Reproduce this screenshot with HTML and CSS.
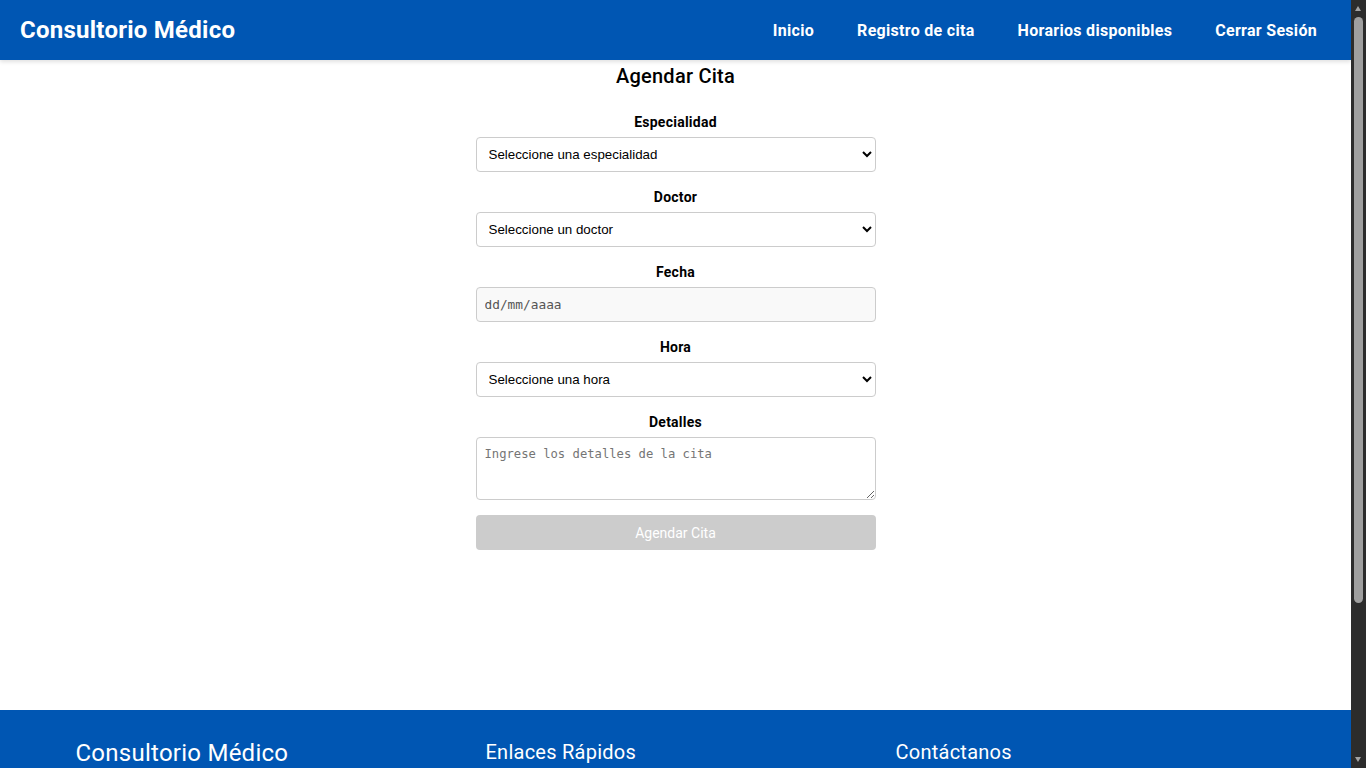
FILE: index.html
```html
<!DOCTYPE html>
<html lang="es">
<head>
<meta charset="utf-8">
<title>Agendar Cita</title>
<link rel="stylesheet" href="styles.css">
</head>
<body>
<header class="topbar">
  <div class="brand">Consultorio Médico</div>
  <nav class="nav">
    <a href="#">Inicio</a>
    <a href="#">Registro de cita</a>
    <a href="#">Horarios disponibles</a>
    <a href="#">Cerrar Sesión</a>
  </nav>
</header>
<main class="main">
  <form class="form">
    <h2 class="form-title">Agendar Cita</h2>
    <div class="group">
      <label class="label">Especialidad</label>
      <select class="control"><option>Seleccione una especialidad</option></select>
    </div>
    <div class="group">
      <label class="label">Doctor</label>
      <select class="control"><option>Seleccione un doctor</option></select>
    </div>
    <div class="group">
      <label class="label">Fecha</label>
      <input class="control date" type="text" placeholder="dd/mm/aaaa">
    </div>
    <div class="group">
      <label class="label">Hora</label>
      <select class="control"><option>Seleccione una hora</option></select>
    </div>
    <div class="group last">
      <label class="label">Detalles</label>
      <textarea class="control area" placeholder="Ingrese los detalles de la cita"></textarea>
    </div>
    <button class="submit" type="button" disabled>Agendar Cita</button>
  </form>
</main>
<footer class="footer">
  <div class="footer-inner">
    <div class="col">
      <h2 class="col-brand">Consultorio Médico</h2>
      <p class="col-text">Atención médica de calidad para usted y su familia.</p>
    </div>
    <div class="col">
      <h3 class="col-title">Enlaces Rápidos</h3>
      <ul class="col-list">
        <li>Inicio</li>
        <li>Registro de cita</li>
        <li>Horarios disponibles</li>
      </ul>
    </div>
    <div class="col">
      <h3 class="col-title">Contáctanos</h3>
      <ul class="col-list">
        <li>Teléfono: 555-123-4567</li>
        <li>Email: contacto@consultorio.com</li>
      </ul>
    </div>
  </div>
  <div class="copy">© 2024 Consultorio Médico. Todos los derechos reservados.</div>
</footer>
<div class="vscroll" aria-hidden="true">
  <span class="arrow-up"></span>
  <span class="thumb"></span>
  <span class="arrow-down"></span>
</div>
</body>
</html>
```
FILE: styles.css
```css
html {
  background: #ffffff;
}
body {
  margin: 0 15px 0 0;
  background: #ffffff;
  font-family: Roboto, "Liberation Sans", Arial, sans-serif;
  letter-spacing: 0.25px;
  color: #000;
}
.topbar {
  height: 60px;
  background: #0056b3;
  display: flex;
  align-items: center;
  justify-content: space-between;
  padding: 0 20px;
  box-shadow: 0 2px 4px rgba(0, 0, 0, 0.12);
  position: relative;
  z-index: 1;
}
.brand {
  color: #fff;
  font-size: 24px;
  font-weight: 700;
}
.nav {
  display: flex;
  gap: 43px;
  padding-right: 14px;
}
.nav a {
  color: #fff;
  text-decoration: none;
  font-weight: 700;
  font-size: 16px;
  letter-spacing: 0.3px;
}
.main {
  min-height: 650px;
}
.form {
  width: 400px;
  margin: 0 auto;
  display: flex;
  flex-direction: column;
}
.form-title {
  margin: 5px 0 26px;
  text-align: center;
  font-size: 20px;
  font-weight: 500;
  line-height: 23px;
}
.group {
  display: flex;
  flex-direction: column;
  margin-bottom: 17px;
}
.group.last {
  margin-bottom: 15px;
}
.label {
  text-align: center;
  font-weight: 700;
  font-size: 14px;
  line-height: 16px;
  margin-bottom: 7px;
}
.control {
  box-sizing: border-box;
  width: 100%;
  height: 35px;
  border: 1px solid #cccccc;
  border-radius: 4px;
  padding: 8px;
  background: #ffffff;
  font-family: "Liberation Sans", Arial, sans-serif;
  font-size: 13.33px;
  letter-spacing: 0;
  color: #000;
}
.date {
  background: #f9f9f9;
  font-family: "DejaVu Sans Mono", monospace;
  font-size: 12.8px;
}
.date::placeholder {
  color: #555;
}
.area {
  height: 63px;
  font-family: "DejaVu Sans Mono", monospace;
  font-size: 12.2px;
  padding-top: 9px;
  resize: vertical;
}
.area::placeholder {
  color: #757575;
}
.submit {
  height: 35px;
  border: none;
  border-radius: 4px;
  background: #cccccc;
  color: #ffffff;
  font-family: Roboto, "Liberation Sans", Arial, sans-serif;
  font-size: 14px;
  letter-spacing: 0;
}
.footer {
  background: #0056b3;
  color: #fff;
  padding: 28px 0 20px;
}
.footer-inner {
  max-width: 1200px;
  margin: 0 auto;
  display: flex;
  gap: 30px;
}
.col {
  flex: 1;
}
.col-brand {
  margin: 0 0 12px;
  font-size: 24px;
  font-weight: 400;
  line-height: 30px;
}
.col-title {
  margin: 0 0 12px;
  font-size: 20px;
  font-weight: 400;
  line-height: 28px;
}
.col-text {
  margin: 0;
  font-size: 15px;
  line-height: 22px;
}
.col-list {
  list-style: none;
  margin: 0;
  padding: 0;
  font-size: 15px;
  line-height: 26px;
}
.copy {
  max-width: 1200px;
  margin: 40px auto 0;
  padding-top: 16px;
  border-top: 1px solid rgba(255, 255, 255, 0.3);
  text-align: center;
  font-size: 14px;
}
.vscroll {
  position: fixed;
  top: 0;
  right: 0;
  width: 15px;
  height: 100vh;
  background: #2c2c2c;
  z-index: 10;
}
.arrow-up,
.arrow-down {
  position: absolute;
  left: 4px;
  width: 0;
  height: 0;
  border-left: 3.5px solid transparent;
  border-right: 3.5px solid transparent;
}
.arrow-up {
  top: 6px;
  border-bottom: 5px solid #a3a3a3;
}
.arrow-down {
  bottom: 6px;
  border-top: 5px solid #a3a3a3;
}
.thumb {
  position: absolute;
  top: 17px;
  left: 3px;
  width: 9px;
  height: 586px;
  border-radius: 5px;
  background: #9f9f9f;
}
```
